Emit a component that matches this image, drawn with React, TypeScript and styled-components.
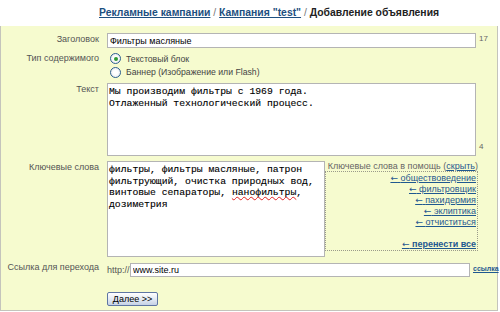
import * as React from 'react';
import styled, { createGlobalStyle } from 'styled-components';

const GlobalStyle = createGlobalStyle`
  html, body {
    margin: 0;
    padding: 0;
    background: #fff;
  }
  body {
    width: 500px;
    height: 312px;
    overflow: hidden;
    font-family: "Liberation Sans", Arial, sans-serif;
    font-size: 9px;
    color: #333;
  }
`;

const Header = styled.h1`
  margin: 0;
  height: 26px;
  box-sizing: border-box;
  padding: 7px 0 0 99px;
  font-size: 10.4px;
  line-height: 12px;
  font-weight: bold;
  color: #222;
  white-space: nowrap;

  a {
    color: #1d4f80;
    text-decoration: underline;
  }
`;

const Sep = styled.span`
  color: #777;
  font-weight: normal;
`;

const Panel = styled.form`
  width: 498px;
  height: 285px;
  box-sizing: border-box;
  margin: 0;
  padding-top: 7px;
  background: #f6fbcf;
  border: 1px solid #c4c4bc;
  border-top: none;
`;

const Row = styled.div<{ $top?: number }>`
  display: flex;
  align-items: flex-start;
  margin-top: ${(p) => p.$top ?? 0}px;
`;

const Label = styled.div<{ $shift?: number }>`
  width: 98px;
  flex: none;
  margin-right: 8px;
  margin-top: ${(p) => p.$shift ?? 0}px;
  text-align: right;
  line-height: 12px;
  color: #555;
  white-space: nowrap;
`;

const Field = styled.div`
  display: flex;
  align-items: flex-start;
`;

const TextInput = styled.input<{ $w: number; $h?: number }>`
  width: ${(p) => p.$w}px;
  height: ${(p) => p.$h ?? 15}px;
  box-sizing: border-box;
  margin: 0;
  padding: 0 2px;
  border: 1px solid #b4b4b4;
  background: #fff;
  font-family: "Liberation Sans", Arial, sans-serif;
  font-size: 9px;
  color: #000;
  outline: none;
`;

const Counter = styled.span<{ $bottom?: boolean }>`
  margin-left: 3px;
  font-size: 8px;
  color: #666;
  align-self: ${(p) => (p.$bottom ? 'flex-end' : 'flex-start')};
  margin-bottom: ${(p) => (p.$bottom ? 5 : 0)}px;
  margin-top: ${(p) => (p.$bottom ? 0 : 1)}px;
`;

const Options = styled.div`
  display: flex;
  flex-direction: column;
`;

const Option = styled.label`
  display: flex;
  align-items: center;
  height: 13.5px;
  padding-left: 3px;
  color: #444;
  font-size: 8.7px;
`;

const Radio = styled.span<{ $on?: boolean }>`
  width: 9px;
  height: 9px;
  margin-right: 5px;
  border: 1px solid #2c5f8f;
  border-radius: 50%;
  background: radial-gradient(circle, #fff 30%, #dfe3e8 100%);
  display: flex;
  align-items: center;
  justify-content: center;

  &::after {
    content: '';
    display: ${(p) => (p.$on ? 'block' : 'none')};
    width: 4px;
    height: 4px;
    border-radius: 50%;
    background: #2f9b35;
  }
`;

const Area = styled.textarea<{ $w: number; $h: number }>`
  width: ${(p) => p.$w}px;
  height: ${(p) => p.$h}px;
  box-sizing: border-box;
  margin: 0;
  padding: 2px 1px;
  border: 1px solid #b4b4b4;
  background: #fff;
  resize: none;
  overflow: hidden;
  font-family: "Liberation Mono", "Courier New", monospace;
  font-size: 9.75px;
  line-height: 11.6px;
  color: #000;
  -webkit-text-stroke: 0.12px #000;
  outline: none;
`;

const FakeArea = styled.div<{ $w: number; $h: number }>`
  width: ${(p) => p.$w}px;
  height: ${(p) => p.$h}px;
  box-sizing: border-box;
  padding: 2px 1px;
  border: 1px solid #b4b4b4;
  background: #fff;
  font-family: "Liberation Mono", "Courier New", monospace;
  font-size: 9.75px;
  line-height: 11.6px;
  color: #000;
  -webkit-text-stroke: 0.12px #000;
`;

const Typo = styled.span`
  text-decoration: underline wavy #e02020;
  text-decoration-thickness: 1px;
  text-decoration-skip-ink: none;
  text-underline-offset: 1px;
`;

const Helper = styled.div`
  width: 153px;
  display: flex;
  flex-direction: column;
  align-items: stretch;
`;

const HelperTitle = styled.div`
  text-align: right;
  line-height: 10px;
  color: #666;
  white-space: nowrap;
`;

const HelperBox = styled.div`
  border: 1px dotted #9a9a8a;
  padding: 1px 1px 0 0;
  display: flex;
  flex-direction: column;
  align-items: flex-end;
`;

const Hint = styled.a<{ $strong?: boolean }>`
  height: 11px;
  line-height: 11px;
  color: #1f5890;
  text-decoration: underline;
  font-weight: ${(p) => (p.$strong ? 'bold' : 'normal')};
  white-space: nowrap;
  cursor: pointer;
`;

const Arrow = styled.span`
  font-family: "DejaVu Sans", sans-serif;
  font-size: 9px;
  font-weight: normal;
  line-height: 0;
`;

const Spacer = styled.div`
  height: 11px;
`;

const Link = styled.a`
  color: #1f5890;
  text-decoration: underline;
`;

const Prefix = styled.span`
  width: 23px;
  flex: none;
  line-height: 14px;
  color: #555;
  white-space: nowrap;
`;

const SmallLink = styled.a`
  margin-left: 3px;
  font-size: 7px;
  font-weight: bold;
  line-height: 12px;
  color: #1f5890;
  text-decoration: underline;
  white-space: nowrap;
`;

const Submit = styled.button`
  margin: 0 0 0 106px;
  width: 51px;
  height: 14px;
  box-sizing: border-box;
  padding: 0;
  border: 1px solid #5f76a3;
  border-radius: 2px;
  background: linear-gradient(#ffffff, #dfe6f1 60%, #c5d1e6);
  font-family: "Liberation Sans", Arial, sans-serif;
  font-size: 9px;
  line-height: 12px;
  color: #000;
`;

const hints = ['обществоведение', 'фильтровщик', 'пахидермия', 'эклиптика', 'отчиститься'];

export default function App() {
  return (
    <>
      <GlobalStyle />
      <Header>
        <a>Рекламные кампании</a> <Sep>/</Sep> <a>Кампания "test"</a> <Sep>/</Sep> Добавление объявления
      </Header>
      <Panel onSubmit={(e) => e.preventDefault()}>
        <Row>
          <Label>Заголовок</Label>
          <Field>
            <TextInput $w={369} defaultValue="Фильтры масляные" />
            <Counter>17</Counter>
          </Field>
        </Row>
        <Row $top={4}>
          <Label>Тип содержимого</Label>
          <Options>
            <Option>
              <Radio $on />
              Текстовый блок
            </Option>
            <Option>
              <Radio />
              Баннер (Изображение или Flash)
            </Option>
          </Options>
        </Row>
        <Row $top={4}>
          <Label>Текст</Label>
          <Field>
            <Area
              $w={369}
              $h={73}
              readOnly
              defaultValue={'Мы производим фильтры с 1969 года.\nОтлаженный технологический процесс.'}
            />
            <Counter $bottom>4</Counter>
          </Field>
        </Row>
        <Row $top={5}>
          <Label>Ключевые слова</Label>
          <Field>
            <FakeArea $w={218} $h={96}>
              фильтры, фильтры масляные, патрон фильтрующий, очистка природных вод, винтовые сепараторы,{' '}
              <Typo>нанофильтры</Typo>, дозиметрия
            </FakeArea>
            <Helper>
              <HelperTitle>
                Ключевые слова в помощь (<Link>скрыть</Link>)
              </HelperTitle>
              <HelperBox>
                {hints.map((h) => (
                  <Hint key={h}>
                    <Arrow>←</Arrow> {h}
                  </Hint>
                ))}
                <Spacer />
                <Hint $strong>
                  <Arrow>←</Arrow> перенести все
                </Hint>
              </HelperBox>
            </Helper>
          </Field>
        </Row>
        <Row $top={6}>
          <Label $shift={-2}>Ссылка для перехода</Label>
          <Field>
            <Prefix>http://</Prefix>
            <TextInput $w={340} $h={14} defaultValue="www.site.ru" />
            <SmallLink>ссылка</SmallLink>
          </Field>
        </Row>
        <Row $top={15}>
          <Submit type="submit">Далее &gt;&gt;</Submit>
        </Row>
      </Panel>
    </>
  );
}
